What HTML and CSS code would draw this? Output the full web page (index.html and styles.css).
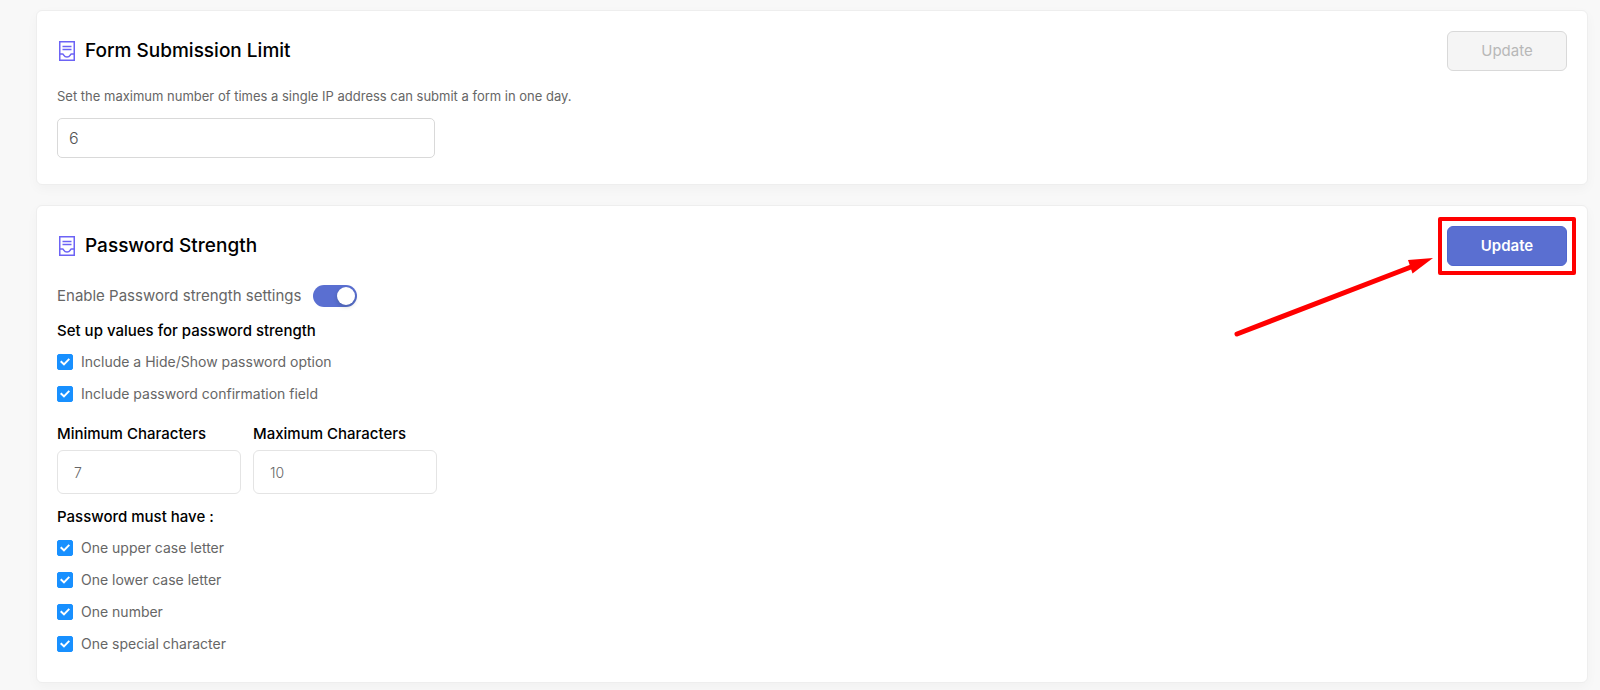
FILE: index.html
```html
<!DOCTYPE html>
<html lang="en">
<head>
<meta charset="utf-8">
<title>Form settings</title>
<link rel="stylesheet" href="styles.css">
</head>
<body>
<main class="page">
  <section class="card">
    <header class="card-header">
      <h2 class="card-title">
        <svg class="title-icon" viewBox="0 0 16 20" aria-hidden="true"><path d="M.75.750h14.500v18.500H.750zM3.500 5.500h9M3.500 8.500h9M1 13h2.500c1.500 0 1 3 4.500 3s3-3 4.500-3H15"/></svg>
        Form Submission Limit
      </h2>
      <button class="button button-disabled" type="button" disabled>Update</button>
    </header>
    <label class="description" for="limit">Set the maximum number of times a single IP address can submit a form in one day.</label>
    <input class="limit-input" id="limit" type="text" inputmode="numeric" value="6">
  </section>

  <section class="card">
    <header class="card-header">
      <h2 class="card-title">
        <svg class="title-icon" viewBox="0 0 16 20" aria-hidden="true"><path d="M.75.750h14.500v18.500H.750zM3.500 5.500h9M3.500 8.500h9M1 13h2.500c1.500 0 1 3 4.500 3s3-3 4.500-3H15"/></svg>
        Password Strength
      </h2>
      <div class="callout">
        <button class="button button-primary" type="button">Update</button>
        <span class="callout-frame"></span>
        <svg class="callout-arrow" viewBox="0 0 200 82" aria-hidden="true"><path class="shaft" d="M4 78L178 11"/><path class="head" d="M200 2L175 4l4.500 13.500z"/></svg>
      </div>
    </header>
    <div class="switch-row">
      <label for="enable">Enable Password strength settings</label>
      <input class="switch" id="enable" type="checkbox" role="switch" checked>
    </div>
    <h3 class="subheading">Set up values for password strength</h3>
    <div class="options">
      <label class="option"><input class="check" type="checkbox" checked>Include a Hide/Show password option</label>
      <label class="option"><input class="check" type="checkbox" checked>Include password confirmation field</label>
    </div>
    <div class="fields">
      <div class="field">
        <label class="subheading" for="min">Minimum Characters</label>
        <input class="field-input" id="min" type="text" inputmode="numeric" value="7">
      </div>
      <div class="field">
        <label class="subheading" for="max">Maximum Characters</label>
        <input class="field-input" id="max" type="text" inputmode="numeric" value="10">
      </div>
    </div>
    <h3 class="subheading">Password must have :</h3>
    <div class="options">
      <label class="option"><input class="check" type="checkbox" checked>One upper case letter</label>
      <label class="option"><input class="check" type="checkbox" checked>One lower case letter</label>
      <label class="option"><input class="check" type="checkbox" checked>One number</label>
      <label class="option"><input class="check" type="checkbox" checked>One special character</label>
    </div>
  </section>
</main>
</body>
</html>
```
FILE: styles.css
```css
* {
  box-sizing: border-box;
}

body {
  margin: 0;
  background: #f8f8f8;
  color: #666;
  font: 400 15px/24px Inter, "Open Sans", sans-serif;
}

input,
button {
  font: inherit;
  margin: 0;
}

.page {
  display: flex;
  flex-direction: column;
  gap: 20px;
  padding: 10px 12px 8px 36px;
}

.card {
  background: #fff;
  border: 1px solid #eee;
  border-radius: 6px;
  box-shadow: 0 4px 12px rgba(0, 0, 0, 0.03);
  padding: 20px 20px 26px;
}

.card-header {
  display: flex;
  align-items: center;
  justify-content: space-between;
  margin-bottom: 13px;
}

.card-title {
  display: flex;
  align-items: center;
  gap: 10px;
  margin: 0;
  padding-left: 2px;
  color: #000;
  font-size: 19px;
  font-weight: 500;
}

.title-icon {
  width: 16px;
  height: 20px;
  fill: none;
  stroke: #6c63f5;
  stroke-width: 1.5;
}

.button {
  display: block;
  width: 120px;
  height: 40px;
  border: 1px solid #d9d9d9;
  border-radius: 6px;
  font-size: 15px;
}

.button-disabled {
  background: #f5f5f5;
  color: #b8b8b8;
  font-weight: 400;
}

.button-primary {
  background: #5a6fd1;
  border-color: #4f66cf;
  color: #fff;
  font-weight: 600;
}

.callout {
  position: relative;
}

.callout-frame {
  position: absolute;
  inset: -9px;
  border: 4px solid #f00;
  border-radius: 2px;
  pointer-events: none;
}

.callout-arrow {
  position: absolute;
  top: 30px;
  right: 134px;
  width: 200px;
  height: 82px;
  pointer-events: none;
}

.shaft {
  stroke: #f00;
  stroke-width: 5;
  stroke-linecap: round;
}

.head {
  fill: #f00;
}

.description {
  display: block;
  margin-bottom: 10px;
  font-size: 13px;
}

.limit-input {
  display: block;
  width: 378px;
  height: 40px;
  padding: 0 11px;
  border: 1px solid #d9d9d9;
  border-radius: 5px;
  background: #fff;
  color: #555;
  font-size: 16px;
  font-weight: 300;
}

.switch-row {
  display: flex;
  align-items: center;
  gap: 12px;
  margin: 18px 0 11px;
}

.switch {
  appearance: none;
  display: flex;
  justify-content: flex-end;
  width: 44px;
  height: 22px;
  padding: 2px;
  border-radius: 11px;
  background: #5a6fd1;
}

.switch::before {
  content: "";
  width: 18px;
  height: 18px;
  border-radius: 50%;
  background: #fff;
  box-shadow: 0 2px 4px rgba(0, 35, 11, 0.2);
}

.switch:not(:checked) {
  justify-content: flex-start;
  background: #bfbfbf;
}

.subheading {
  margin: 0;
  color: #000;
  font-size: 15px;
  font-weight: 500;
}

.options {
  display: flex;
  flex-direction: column;
  align-items: flex-start;
  gap: 8px;
  margin-top: 7px;
}

.option {
  display: flex;
  align-items: center;
  gap: 8px;
  font-size: 14px;
}

.check {
  appearance: none;
  display: grid;
  place-items: center;
  width: 16px;
  height: 16px;
  border: 1px solid #1890ff;
  border-radius: 2px;
}

.check:checked {
  background: #1890ff;
}

.check:checked::before {
  content: "";
  width: 10px;
  height: 8px;
  background: #fff;
  clip-path: polygon(0 50%, 14% 32%, 40% 62%, 86% 4%, 100% 20%, 40% 98%);
}

.fields {
  display: flex;
  gap: 12px;
  margin: 16px 0 11px;
}

.field {
  display: flex;
  flex-direction: column;
  gap: 4px;
}

.field-input {
  width: 184px;
  height: 44px;
  padding: 0 16px;
  border: 1px solid #e4e4e4;
  border-radius: 6px;
  background: #fff;
  color: #666;
  font-size: 14px;
  font-weight: 300;
}
```
